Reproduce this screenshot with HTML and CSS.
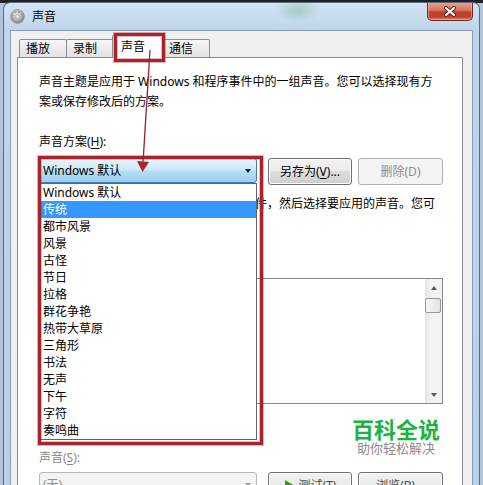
FILE: index.html
```html
<!DOCTYPE html>
<html lang="zh">
<head>
<meta charset="utf-8">
<title>声音</title>
<link rel="stylesheet" href="styles.css">
</head>
<body>
<div class="window">
  <div class="titlebar">
    <svg class="app-icon" width="15" height="15" viewBox="0 0 15 15">
      <defs>
        <radialGradient id="g1" cx="0.45" cy="0.4" r="0.6">
          <stop offset="0" stop-color="#f4f4f4"/>
          <stop offset="0.6" stop-color="#b9b9b9"/>
          <stop offset="1" stop-color="#7c7c7c"/>
        </radialGradient>
      </defs>
      <circle cx="7.5" cy="7.5" r="6.8" fill="url(#g1)" stroke="#8a8a8a" stroke-width="0.8"/>
      <circle cx="7.5" cy="7.5" r="4.6" fill="none" stroke="#9a9a9a" stroke-width="1.6" stroke-dasharray="2 1.6"/>
      <circle cx="7.5" cy="7.5" r="2" fill="#e8e8e8" stroke="#8c8c8c" stroke-width="0.6"/>
    </svg>
    <span class="title">声音</span>
    <div class="close">
      <svg width="14" height="11" viewBox="0 0 14 11">
        <path d="M3 2 L11 9 M11 2 L3 9" stroke="#5a1d16" stroke-width="4" stroke-linecap="round"/>
        <path d="M3 2 L11 9 M11 2 L3 9" stroke="#ffffff" stroke-width="2.2" stroke-linecap="round"/>
      </svg>
    </div>
  </div>
  <div class="client">
    <div class="tabs">
      <div class="tab">播放</div>
      <div class="tab">录制</div>
      <div class="tab active">声音</div>
      <div class="tab">通信</div>
    </div>
    <div class="pane">
      <p class="desc">声音主题是应用于 Windows 和程序事件中的一组声音。您可以选择现有方案或保存修改后的方案。</p>
      <div class="label">声音方案(<u>H</u>):</div>
      <div class="scheme-row">
        <div class="combo focused">
          <span class="combo-text">Windows 默认</span>
          <span class="arrow"></span>
          <ul class="dropdown">
            <li>Windows 默认</li>
            <li class="selected">传统</li>
            <li>都市风景</li>
            <li>风景</li>
            <li>古怪</li>
            <li>节日</li>
            <li>拉格</li>
            <li>群花争艳</li>
            <li>热带大草原</li>
            <li>三角形</li>
            <li>书法</li>
            <li>无声</li>
            <li>下午</li>
            <li>字符</li>
            <li>奏鸣曲</li>
          </ul>
        </div>
        <button class="btn save"><span>另存为(<u>V</u>)...</span></button>
        <button class="btn del" disabled><span>删除(D)</span></button>
      </div>
      <p class="note">要更改声音，请在以下列表中单击程序事件，然后选择要应用的声音。您可以将更改保存为新的声音方案。</p>
      <div class="listbox">
        <div class="vscroll">
          <div class="sb-btn"><span class="tri-up"></span></div>
          <div class="sb-track"><div class="sb-thumb"></div></div>
          <div class="sb-btn"><span class="tri-down"></span></div>
        </div>
      </div>
      <div class="sound-label">声音(<u>S</u>):</div>
      <div class="bottom-row">
        <div class="combo disabled">
          <span class="combo-text">(无)</span>
          <span class="arrow"></span>
        </div>
        <button class="btn test">
          <svg width="11" height="12" viewBox="0 0 11 12"><polygon points="1,0 11,6 1,12" fill="#2f9a2c"/></svg>
          <span>测试(<u>T</u>)</span>
        </button>
        <button class="btn browse"><span>浏览(<u>B</u>)...</span></button>
      </div>
    </div>
  </div>
</div>

<div class="mark mark-tab"></div>
<div class="mark mark-combo"></div>

<div class="watermark">
  <div class="wm-title">百科全说</div>
  <div class="wm-sub">助你轻松解决</div>
</div>

<svg class="pointer" width="483" height="485" viewBox="0 0 483 485">
  <path d="M150 50 L143 163" stroke="#9b2027" stroke-width="1.3" fill="none"/>
  <polygon points="137,161 149,162 142.5,172" fill="#ad232a"/>
</svg>
</body>
</html>
```

FILE: styles.css
```css
* { box-sizing: border-box; }
html, body { margin: 0; }
body {
  width: 483px;
  height: 485px;
  overflow: hidden;
  position: relative;
  background: linear-gradient(#1f2227 0, #1f2227 3px, #b3c4d6 3px);
  font-family: "Noto Sans", "Noto Sans CJK SC", sans-serif;
  font-size: 12px;
  line-height: 20px;
  color: #000;
}
u { text-decoration: underline; text-underline-offset: 2px; }

.window {
  margin: 2px 0 0 3px;
  width: 477px;
  height: 483px;
  border: 1px solid #5b6b7e;
  border-bottom: 0;
  border-radius: 7px 7px 0 0;
  padding: 0 6px;
  background: linear-gradient(180deg, #d3e3f4 0, #bfd5ec 27px, #b9d0e9 100%);
  display: flex;
  flex-direction: column;
  overflow: hidden;
}

.titlebar {
  flex: none;
  height: 27px;
  display: flex;
  align-items: center;
  background: radial-gradient(ellipse 24px 12px at 288px 7px, rgba(90, 170, 110, 0.35), rgba(90, 170, 110, 0));
}
.app-icon { flex: none; }
.title { margin-left: 7px; line-height: 16px; }
.close {
  margin-left: auto;
  align-self: flex-start;
  margin-top: -1px;
  width: 46px;
  height: 19px;
  border: 1px solid #6e2a22;
  border-top: 0;
  border-radius: 0 0 5px 5px;
  background: linear-gradient(#e9a895 0, #d77563 45%, #c2412f 55%, #b8402e 80%, #d97d63 100%);
  box-shadow: inset 0 0 0 1px rgba(255, 200, 190, 0.5);
  display: flex;
  align-items: center;
  justify-content: center;
}

.client {
  flex: 1;
  min-height: 0;
  border: 1px solid #8a9db4;
  border-bottom: 0;
  background: #f0f0f0;
  padding: 4px 9px 0 6px;
  display: flex;
  flex-direction: column;
}

.tabs {
  flex: none;
  display: flex;
  align-items: flex-end;
  padding-left: 2px;
  height: 23px;
  margin-bottom: -1px;
  position: relative;
  z-index: 1;
}
.tab {
  flex: none;
  width: 48px;
  height: 18px;
  margin-bottom: 1px;
  margin-right: -1px;
  border: 1px solid #898c95;
  border-bottom: 0;
  border-radius: 2px 2px 0 0;
  background: linear-gradient(#f8f8f8, #ececec 50%, #e2e2e2);
  padding: 1px 0 0 6px;
  line-height: 16px;
}
.tab.active {
  position: relative;
  z-index: 2;
  width: 52px;
  height: 23px;
  margin: 0 -2px 0 -1px;
  background: #fff;
  padding: 3px 0 0 8px;
}

.pane {
  flex: none;
  height: 460px;
  border: 1px solid #898c95;
  background: #fff;
  padding: 14px 19px 0 21px;
}
.desc { margin: 0; }
.label { margin-top: 20px; }

.scheme-row, .bottom-row {
  display: flex;
  align-items: flex-start;
}
.scheme-row { margin-top: 6px; }

.combo {
  position: relative;
  flex: none;
  width: 218px;
  height: 25px;
  margin-right: 11px;
  border: 1px solid #707070;
  border-radius: 3px;
  display: flex;
  align-items: center;
  padding: 0 5px 0 3px;
}
.combo.focused {
  border-color: #3c7fb1;
  background: linear-gradient(#e6f4fc 0, #cfe9f8 45%, #b3dcf4 55%, #9ccfee 100%);
}
.combo.disabled {
  border-color: #b5b9bd;
  background: #f4f4f4;
  color: #8d8d8d;
}
.combo-text { line-height: 18px; }
.arrow {
  margin-left: auto;
  width: 0;
  height: 0;
  border-left: 3.5px solid transparent;
  border-right: 3.5px solid transparent;
  border-top: 4px solid #1b1b1b;
}
.combo.disabled .arrow { border-top-color: #9a9a9a; }

.dropdown {
  position: absolute;
  top: 24px;
  left: -1px;
  width: 218px;
  margin: 0;
  padding: 0;
  list-style: none;
  background: #fff;
  border: 1px solid #646464;
  z-index: 5;
}
.dropdown li {
  height: 17px;
  line-height: 17px;
  padding-left: 3px;
  white-space: nowrap;
}
.dropdown li.selected {
  background: #3399ff;
  color: #fff;
}

.btn {
  flex: none;
  height: 27px;
  border: 1px solid #707070;
  border-radius: 3px;
  background: linear-gradient(#f2f2f2 0, #ebebeb 50%, #dddddd 50%, #cfcfcf 100%);
  box-shadow: inset 0 0 0 1px #fcfcfc;
  font: inherit;
  line-height: 16px;
  color: #000;
  padding: 0;
  display: flex;
  align-items: center;
  justify-content: center;
  gap: 4px;
}
.btn.save, .btn.test { width: 84px; margin-right: 6px; }
.btn.del, .btn.browse { width: 85px; }
.btn.del {
  border-color: #adb2b5;
  background: #f4f4f4;
  box-shadow: none;
  color: #8d8d8d;
}
.btn.test, .btn.browse { color: #4a4a4a; }

.note { margin: 9px 0 0; }

.listbox {
  margin-top: 44px;
  height: 126px;
  border: 1px solid #828790;
  display: flex;
  justify-content: flex-end;
}
.vscroll {
  width: 17px;
  display: flex;
  flex-direction: column;
  background: linear-gradient(90deg, #e4e4e4, #f3f3f3 35%, #f3f3f3);
}
.sb-btn {
  height: 17px;
  display: flex;
  align-items: center;
  justify-content: center;
}
.tri-up, .tri-down {
  width: 0;
  height: 0;
  border-left: 3.5px solid transparent;
  border-right: 3.5px solid transparent;
}
.tri-up { border-bottom: 4px solid #5a5a5a; }
.tri-down { border-top: 4px solid #5a5a5a; }
.sb-track { flex: 1; padding: 2px 1px 0 0; }
.sb-thumb {
  height: 15px;
  border: 1px solid #979797;
  border-radius: 2px;
  background: linear-gradient(90deg, #f7f7f7, #e2e2e2);
}

.sound-label { margin-top: 44px; color: #878787; }
.bottom-row { margin-top: 4px; }

.mark {
  position: absolute;
  border: 3px solid #a8232a;
  box-shadow: 0 0 0 1px rgba(168, 35, 42, 0.35), inset 0 0 0 1px rgba(168, 35, 42, 0.3);
  z-index: 10;
}
.mark-tab { left: 114px; top: 33px; width: 51px; height: 29px; }
.mark-combo { left: 38px; top: 156px; width: 225px; height: 289px; }

.watermark {
  position: absolute;
  left: 337px;
  top: 404px;
  width: 110px;
  height: 52px;
  padding: 13px 0 0 8px;
  background: #fff;
  display: flex;
  flex-direction: column;
  align-items: center;
  z-index: 8;
}
.wm-title {
  font-family: "Noto Sans CJK SC", sans-serif;
  font-size: 22px;
  line-height: 22px;
  font-weight: 700;
  color: #1cb43c;
}
.wm-sub {
  margin-top: 2px;
  font-family: "Noto Sans CJK SC", sans-serif;
  font-size: 13px;
  line-height: 13px;
  color: #8a8a8a;
}

.pointer {
  position: absolute;
  left: 0;
  top: 0;
  z-index: 12;
  pointer-events: none;
}
```
